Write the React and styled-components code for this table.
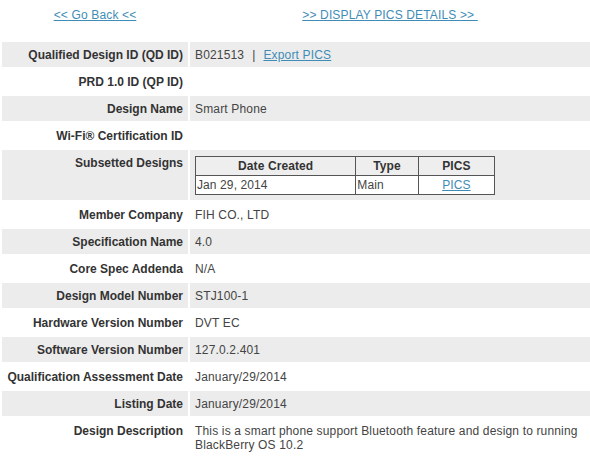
import React from "react";
import styled, { createGlobalStyle } from "styled-components";

const Global = createGlobalStyle`
  html, body { margin: 0; padding: 0; background: #fff; }
  body { font-family: Arial, "Liberation Sans", sans-serif; font-size: 12px; color: #444; }
`;

const Page = styled.div`
  width: 590px;
  padding: 0 0 0 2px;
  box-sizing: border-box;
`;

const TopBar = styled.div`
  display: grid;
  grid-template-columns: 186px 1fr;
  column-gap: 2px;
  height: 42px;
  padding-top: 8px;
  box-sizing: border-box;
`;

const TopCell = styled.div`
  text-align: center;
  line-height: 14px;
  letter-spacing: 0.15px;
`;

const Link = styled.a`
  color: #3f8db6;
  text-decoration: underline;
  cursor: pointer;
  white-space: pre;
`;

const Grid = styled.div`
  display: grid;
  grid-template-columns: 186px 1fr;
  gap: 2px;
`;

const Label = styled.div`
  background: ${(p) => (p.$shaded ? "#ececec" : "#fff")};
  font-weight: bold;
  color: #333;
  text-align: right;
  padding: 6px 5px 5px 5px;
  line-height: 14px;
  min-height: 14px;
  white-space: nowrap;
`;

const Value = styled.div`
  background: ${(p) => (p.$shaded ? "#ececec" : "#fff")};
  color: #444;
  padding: 6px 8px 5px 5px;
  line-height: 14px;
  min-height: 14px;
  letter-spacing: 0.16px;
`;

const Sep = styled.span`
  margin: 0 8px;
`;

const Sub = styled.table`
  border-collapse: collapse;
  width: 300px;
  border: 1px solid #333;
  font-size: 12px;
  line-height: 14px;
  letter-spacing: 0.1px;
`;

const Th = styled.th`
  background: #eeeeee;
  color: #333;
  font-weight: bold;
  text-align: center;
  border: 1px solid #555;
  height: 18px;
  padding: 0 2px;
  width: ${(p) => p.$w}px;
`;

const Td = styled.td`
  background: #fff;
  color: #444;
  text-align: ${(p) => (p.$center ? "center" : "left")};
  border: 1px solid #555;
  height: 18px;
  padding: 0 1px;
`;

const rows = [
  ["Qualified Design ID (QD ID)", "qdid"],
  ["PRD 1.0 ID (QP ID)", ""],
  ["Design Name", "Smart Phone"],
  ["Wi-Fi® Certification ID", ""],
  ["Subsetted Designs", "sub"],
  ["Member Company", "FIH CO., LTD"],
  ["Specification Name", "4.0"],
  ["Core Spec Addenda", "N/A"],
  ["Design Model Number", "STJ100-1"],
  ["Hardware Version Number", "DVT EC"],
  ["Software Version Number", "127.0.2.401"],
  ["Qualification Assessment Date", "January/29/2014"],
  ["Listing Date", "January/29/2014"],
  [
    "Design Description",
    "This is a smart phone support Bluetooth feature and design to running BlackBerry OS 10.2",
  ],
];

function renderValue(v) {
  if (v === "qdid")
    return (
      <>
        B021513<Sep>|</Sep>
        <Link>Export PICS</Link>
      </>
    );
  if (v === "sub")
    return (
      <Sub>
        <thead>
          <tr>
            <Th $w={165}>Date Created</Th>
            <Th $w={60}>Type</Th>
            <Th $w={75}>PICS</Th>
          </tr>
        </thead>
        <tbody>
          <tr>
            <Td>Jan 29, 2014</Td>
            <Td>Main</Td>
            <Td $center>
              <Link>PICS</Link>
            </Td>
          </tr>
        </tbody>
      </Sub>
    );
  return v;
}

export default function App() {
  return (
    <Page>
      <Global />
      <TopBar>
        <TopCell>
          <Link>{"<< Go Back <<"}</Link>
        </TopCell>
        <TopCell>
          <Link>{">> DISPLAY PICS DETAILS >> "}</Link>
        </TopCell>
      </TopBar>
      <Grid>
        {rows.map(([label, value], i) => (
          <React.Fragment key={label}>
            <Label $shaded={i % 2 === 0}>{label}</Label>
            <Value $shaded={i % 2 === 0}>{renderValue(value)}</Value>
          </React.Fragment>
        ))}
      </Grid>
    </Page>
  );
}
